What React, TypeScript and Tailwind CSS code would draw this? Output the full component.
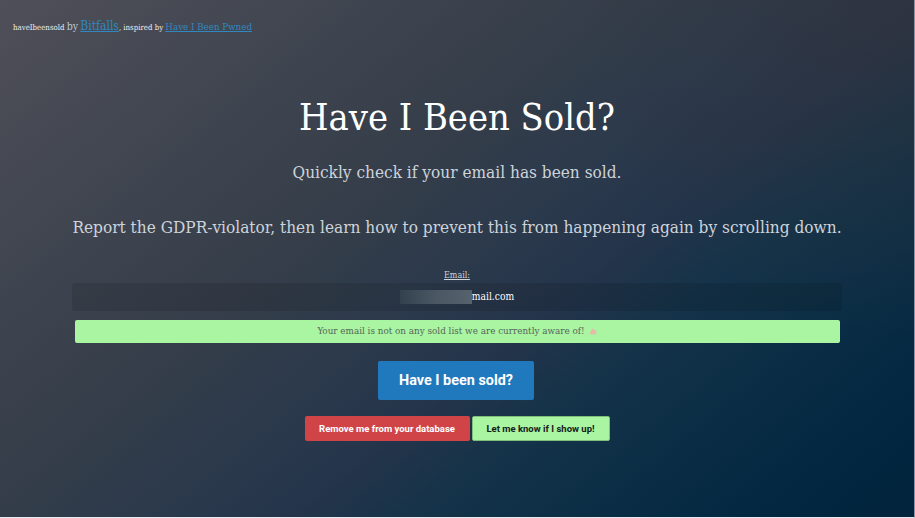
export default function App() {
  return (
    <div className="h-[518px] w-[915px] overflow-hidden border-r border-b border-r-[#8a93a6] border-b-[#e6e9ee] bg-[radial-gradient(circle_at_100%_0%,rgba(58,50,52,0.45)_0%,rgba(58,50,52,0)_32%),linear-gradient(141deg,#4f4f58_0%,#3e444f_25%,#343d49_40%,#2c3a4c_50%,#24344a_60%,#153349_68%,#0a2d45_80%,#022640_92%,#02243c_100%)] font-['DejaVu_Serif_Condensed','DejaVu_Serif',serif] text-white">
      <div className="h-[76px] whitespace-nowrap pl-[13px] pt-[18px] text-[7.8px] leading-[16px] text-[#eeeeee]">
        haveIbeensold <span className="text-[10.5px] text-[#b9c6d2]">by</span>{' '}
        <a className="text-[12px] text-[#2f88c0] underline">Bitfalls</a>, inspired by{' '}
        <a className="text-[9.7px] text-[#2f88c0] underline">Have I Been Pwned</a>
      </div>

      <div className="flex flex-col items-center">
        <h1 className="mt-[19px] text-[37.7px] leading-[44px] text-white">Have I Been Sold?</h1>
        <p className="mt-[21px] text-[17.1px] leading-[24px] text-[#cdd3da]">Quickly check if your email has been sold.</p>
        <p className="mt-[31px] whitespace-nowrap text-[17.1px] leading-[24px] text-[#cdd3da]">
          Report the GDPR-violator, then learn how to prevent this from happening again by scrolling down.
        </p>

        <label className="mt-[30px] text-[8.9px] leading-[12px] text-[#d0d4d9] underline">Email:</label>
        <div className="mt-[2px] flex h-[28px] w-[770px] items-center justify-center rounded-[3px] bg-black/10 text-[10.2px] text-white">
          <span className="h-[14px] w-[72px] bg-gradient-to-r from-[#33414f] via-[#4a5864] to-[#56626c] blur-[0.5px]" />
          <span>mail.com</span>
        </div>
        <div className="mt-[9px] flex h-[23px] w-[765px] items-center justify-center gap-1 rounded-[2px] bg-[#aaf5a2] text-[9.8px] text-[#55655a]">
          <span>Your email is not on any sold list we are currently aware of!</span>
          <svg width="8" height="9" viewBox="0 0 9 9"><path d="M4 0.8 L5.4 3 H8.2 L8 7.6 H1.6 Q0.6 5 2.4 3.4Z" fill="#e8b8a8" /></svg>
        </div>

        <button className="mt-[18px] mr-[2px] h-[39px] w-[156px] rounded-[2px] bg-[#2079bd] pt-px font-['Roboto',sans-serif] text-[14.4px] font-bold text-white">
          Have I been sold?
        </button>

        <div className="mt-[16px] flex gap-[2px]">
          <button className="h-[25px] w-[165px] rounded-[2px] bg-[#d04448] pt-px font-['Roboto',sans-serif] text-[9.5px] font-bold text-white">
            Remove me from your database
          </button>
          <button className="h-[25px] w-[138px] rounded-[2px] border border-[#7fbf7a] bg-[#aaf5a2] pt-px font-['Roboto',sans-serif] text-[9.5px] font-bold text-[#14201a]">
            Let me know if I show up!
          </button>
        </div>
      </div>
    </div>
  )
}
